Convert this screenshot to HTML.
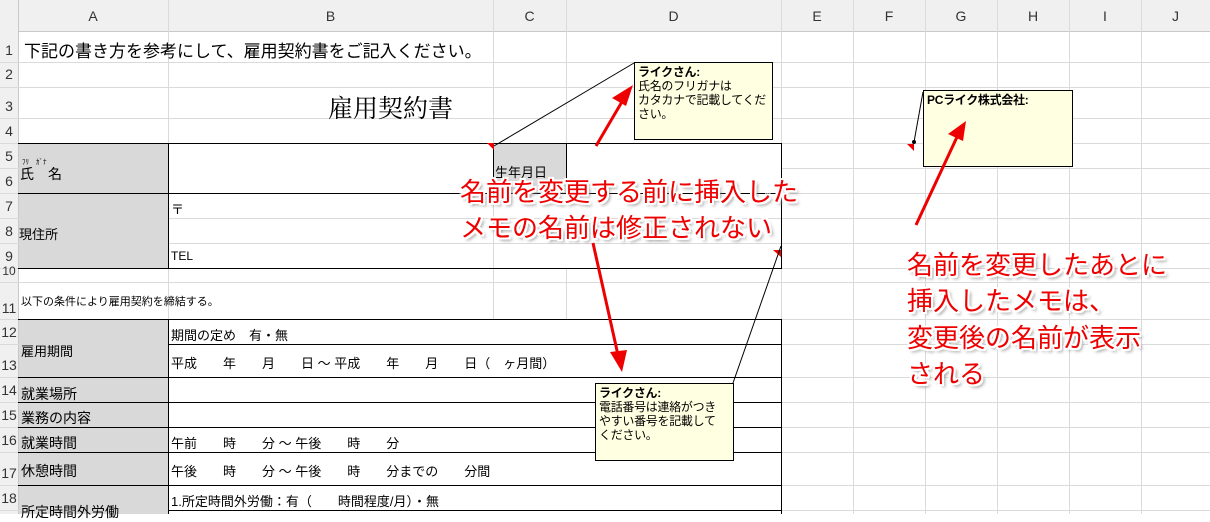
<!DOCTYPE html><html><head><meta charset="utf-8"><style>
body{margin:0;width:1210px;height:514px;overflow:hidden;background:#fff;font-family:"Liberation Sans","Noto Sans CJK JP",sans-serif;position:relative}
.a{position:absolute}
.vl{position:absolute;width:1px;background:#dadada}
.hl{position:absolute;height:1px;background:#dadada}
.t{position:absolute;font-size:13px;color:#000;white-space:nowrap}
.rn{position:absolute;left:0;width:18px;font-size:14px;color:#333;text-align:center}
.ch{position:absolute;top:0;height:31px;line-height:33px;font-size:14px;color:#333;text-align:center}
.bk{position:absolute;background:#000}
.memo{position:absolute;background:#ffffe1;border:1px solid #000;font-size:12px;line-height:14px;padding:2px 3px;box-sizing:border-box;white-space:nowrap;letter-spacing:-0.3px}
.red{position:absolute;font-size:26px;color:#e00;white-space:nowrap;text-shadow:2px 2px 0 #fff,-2px -2px 0 #fff,2px -2px 0 #fff,-2px 2px 0 #fff,0 2px 0 #fff,2px 0 0 #fff,0 -2px 0 #fff,-2px 0 0 #fff,3px 3px 3px #888}
</style></head><body>
<div class="a" style="left:0;top:0;width:1210px;height:31px;background:#f0f0f0;border-bottom:1px solid #c8c8c8"></div>
<div class="a" style="left:0;top:0;width:18px;height:514px;background:#f0f0f0;border-right:1px solid #c8c8c8"></div>
<div class="vl" style="left:168px;top:0;height:514px"></div><div class="vl" style="left:493px;top:0;height:514px"></div><div class="vl" style="left:566px;top:0;height:514px"></div><div class="vl" style="left:781px;top:0;height:514px"></div><div class="vl" style="left:853px;top:0;height:514px"></div><div class="vl" style="left:925px;top:0;height:514px"></div><div class="vl" style="left:997px;top:0;height:514px"></div><div class="vl" style="left:1069px;top:0;height:514px"></div><div class="vl" style="left:1141px;top:0;height:514px"></div>
<div class="hl" style="top:62px;left:0;width:1210px"></div><div class="hl" style="top:87px;left:0;width:1210px"></div><div class="hl" style="top:118px;left:0;width:1210px"></div><div class="hl" style="top:143px;left:0;width:1210px"></div><div class="hl" style="top:168px;left:0;width:1210px"></div><div class="hl" style="top:193px;left:0;width:1210px"></div><div class="hl" style="top:218px;left:0;width:1210px"></div><div class="hl" style="top:243px;left:0;width:1210px"></div><div class="hl" style="top:268px;left:0;width:1210px"></div><div class="hl" style="top:282px;left:0;width:1210px"></div><div class="hl" style="top:319px;left:0;width:1210px"></div><div class="hl" style="top:344px;left:0;width:1210px"></div><div class="hl" style="top:377px;left:0;width:1210px"></div><div class="hl" style="top:402px;left:0;width:1210px"></div><div class="hl" style="top:427px;left:0;width:1210px"></div><div class="hl" style="top:452px;left:0;width:1210px"></div><div class="hl" style="top:485px;left:0;width:1210px"></div><div class="hl" style="top:510px;left:0;width:1210px"></div>
<div class="ch" style="left:18px;width:150px">A</div><div class="ch" style="left:168px;width:325px">B</div><div class="ch" style="left:493px;width:73px">C</div><div class="ch" style="left:566px;width:215px">D</div><div class="ch" style="left:781px;width:72px">E</div><div class="ch" style="left:853px;width:72px">F</div><div class="ch" style="left:925px;width:72px">G</div><div class="ch" style="left:997px;width:72px">H</div><div class="ch" style="left:1069px;width:72px">I</div><div class="ch" style="left:1141px;width:69px">J</div>
<div class="rn" style="top:42px">1</div><div class="rn" style="top:66px">2</div><div class="rn" style="top:98px">3</div><div class="rn" style="top:123px">4</div><div class="rn" style="top:148px">5</div><div class="rn" style="top:173px">6</div><div class="rn" style="top:198px">7</div><div class="rn" style="top:223px">8</div><div class="rn" style="top:248px">9</div><div class="rn" style="top:264px;font-size:12px">10</div><div class="rn" style="top:300px">11</div><div class="rn" style="top:324px">12</div><div class="rn" style="top:357px">13</div><div class="rn" style="top:382px">14</div><div class="rn" style="top:407px">15</div><div class="rn" style="top:432px">16</div><div class="rn" style="top:465px">17</div><div class="rn" style="top:490px">18</div>
<div class="a" style="left:19px;top:143px;width:149px;height:125px;background:#d9d9d9"></div>
<div class="a" style="left:19px;top:319px;width:149px;height:195px;background:#d9d9d9"></div>
<div class="a" style="left:493px;top:143px;width:73px;height:50px;background:#d9d9d9"></div>
<div class="a" style="left:169px;top:143px;width:324px;height:125px;background:#fff"></div>
<div class="a" style="left:566px;top:143px;width:215px;height:125px;background:#fff"></div>
<div class="a" style="left:169px;top:319px;width:612px;height:195px;background:#fff"></div>
<div class="hl" style="top:218px;left:169px;width:612px"></div><div class="hl" style="top:243px;left:169px;width:612px"></div>
<div class="bk" style="left:18px;top:143px;width:763px;height:1px"></div><div class="bk" style="left:18px;top:193px;width:763px;height:1px"></div><div class="bk" style="left:18px;top:268px;width:763px;height:1px"></div>
<div class="bk" style="left:168px;top:143px;width:1px;height:125px"></div><div class="bk" style="left:781px;top:143px;width:1px;height:126px"></div><div class="bk" style="left:493px;top:143px;width:1px;height:50px"></div><div class="bk" style="left:566px;top:143px;width:1px;height:50px"></div>
<div class="bk" style="left:18px;top:319px;width:763px;height:1px"></div><div class="bk" style="left:168px;top:344px;width:613px;height:1px"></div><div class="bk" style="left:18px;top:377px;width:763px;height:1px"></div><div class="bk" style="left:18px;top:402px;width:763px;height:1px"></div><div class="bk" style="left:18px;top:427px;width:763px;height:1px"></div><div class="bk" style="left:18px;top:452px;width:763px;height:1px"></div><div class="bk" style="left:18px;top:485px;width:763px;height:1px"></div><div class="bk" style="left:168px;top:510px;width:613px;height:1px"></div>
<div class="bk" style="left:168px;top:319px;width:1px;height:195px"></div><div class="bk" style="left:781px;top:319px;width:1px;height:195px"></div>
<div class="t" style="left:24px;top:37px;font-size:17px">下記の書き方を参考にして、雇用契約書をご記入ください。</div>
<div class="t" style="left:328px;top:89px;font-size:25px;font-family:'Liberation Serif','Noto Serif CJK SC',serif">雇用契約書</div>
<div class="t" style="left:22px;top:157px;font-size:7px">ﾌﾘ　ｶﾞﾅ</div>
<div class="t" style="left:20px;top:164px;font-size:14px">氏　名</div>
<div class="t" style="left:495px;top:162px">生年月日</div>
<div class="t" style="left:19px;top:224px">現住所</div>
<div class="t" style="left:171px;top:199px">〒</div>
<div class="t" style="left:171px;top:249px;font-size:12px">TEL</div>
<div class="t" style="left:21px;top:293px;font-size:11px">以下の条件により雇用契約を締結する。</div>
<div class="t" style="left:21px;top:341px">雇用期間</div>
<div class="t" style="left:171px;top:325px">期間の定め　有・無</div>
<div class="t" style="left:171px;top:353px">平成　　年　　月　　日 ～ 平成　　年　　月　　日（　ヶ月間）</div>
<div class="t" style="left:21px;top:384px;font-size:14px">就業場所</div>
<div class="t" style="left:21px;top:408px;font-size:14px">業務の内容</div>
<div class="t" style="left:21px;top:433px;font-size:14px">就業時間</div>
<div class="t" style="left:171px;top:433px">午前　　時　　分 ～ 午後　　時　　分</div>
<div class="t" style="left:21px;top:461px;font-size:14px">休憩時間</div>
<div class="t" style="left:171px;top:461px">午後　　時　　分 ～ 午後　　時　　分までの　　分間</div>
<div class="t" style="left:171px;top:491px">1.所定時間外労働：有（　　時間程度/月）・無</div>
<div class="t" style="left:21px;top:502px;font-size:14px">所定時間外労働</div>
<div class="memo" style="left:634px;top:62px;width:139px;height:78px"><b>ライクさん:</b><br>氏名のフリガナは<br>カタカナで記載してくだ<br>さい。</div>
<div class="memo" style="left:595px;top:383px;width:139px;height:78px"><b>ライクさん:</b><br>電話番号は連絡がつき<br>やすい番号を記載して<br>ください。</div>
<div class="memo" style="left:923px;top:90px;width:150px;height:77px"><b>PCライク株式会社:</b></div>
<svg class="a" style="left:0;top:0" width="1210" height="514">
<polygon points="487,143 494,143 494,150" fill="#e00"/>
<polygon points="773,250 781,250 781,257" fill="#e00"/>
<polygon points="907,144 914,144 914,151" fill="#e00"/>
<line x1="494" y1="146" x2="634" y2="63" stroke="#000" stroke-width="1"/>
<line x1="781" y1="246" x2="733" y2="383" stroke="#000" stroke-width="1"/>
<line x1="914" y1="142" x2="923" y2="92" stroke="#000" stroke-width="1"/>
<circle cx="914" cy="142" r="2"/>
<g fill="#e00" stroke="#e00">
<line x1="596" y1="146" x2="623" y2="100" stroke-width="3"/><polygon points="633,85 612,98 626,106" stroke="none"/>
<line x1="593" y1="243" x2="618" y2="355" stroke-width="3"/><polygon points="622,372 610,352 627,350" stroke="none"/>
<line x1="916" y1="225" x2="957" y2="137" stroke-width="3"/><polygon points="966,121 948,134 963,141" stroke="none"/>
</g>
</svg>
<div class="red" style="left:460px;top:172px">名前を変更する前に挿入した</div>
<div class="red" style="left:460px;top:208px">メモの名前は修正されない</div>
<div class="red" style="left:907px;top:245px">名前を変更したあとに</div>
<div class="red" style="left:907px;top:281px">挿入したメモは、</div>
<div class="red" style="left:907px;top:318px">変更後の名前が表示</div>
<div class="red" style="left:907px;top:354px">される</div>
</body></html>
